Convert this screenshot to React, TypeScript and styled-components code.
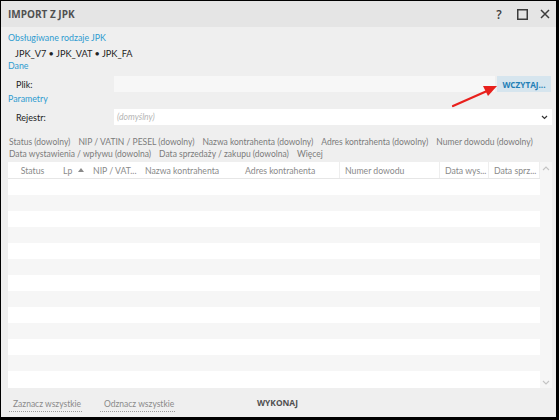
import { createGlobalStyle, styled } from 'styled-components';

const GlobalStyle = createGlobalStyle`
  html, body {
    margin: 0;
    padding: 0;
    background: #ffffff;
  }
  body {
    font-family: Lato, 'Open Sans', sans-serif;
  }
  * {
    box-sizing: border-box;
  }
`;

const Window = styled.div`
  position: relative;
  width: 559px;
  height: 420px;
  display: flex;
  flex-direction: column;
  background: #efefef;
  border-style: solid;
  border-color: #000;
  border-width: 1px 3px 3px 1px;
  overflow: hidden;
`;

const TitleBar = styled.div`
  height: 26px;
  flex: none;
  display: flex;
  align-items: center;
  padding: 0 0 0 7px;
  background: #e5e5e5;
`;

const Title = styled.div`
  flex: 1;
  font-family: 'Open Sans', sans-serif;
  font-size: 10px;
  font-weight: 700;
  color: #505050;
`;

const TitleButtons = styled.div`
  display: flex;
  align-items: center;
  gap: 9px;
  padding-right: 4px;
  color: #3c3c3c;
`;

const TitleButton = styled.div`
  width: 14px;
  height: 14px;
  display: flex;
  align-items: center;
  justify-content: center;
  font-family: 'Open Sans', sans-serif;
  font-size: 12px;
  font-weight: 600;
`;

const Body = styled.div`
  flex: 1;
  display: flex;
  flex-direction: column;
  padding: 0 4px 0 7px;
  min-height: 0;
`;

const SectionTitle = styled.div<{ $top: number }>`
  margin-top: ${(p) => p.$top}px;
  height: 12px;
  line-height: 12px;
  font-size: 8.8px;
  color: #2e9bd0;
`;

const TypesList = styled.div`
  margin-top: 4px;
  padding-left: 7px;
  height: 12px;
  line-height: 12px;
  font-size: 9.2px;
  color: #222;
`;

const FieldRow = styled.div`
  margin-top: 4px;
  height: 16px;
  display: flex;
  align-items: stretch;
`;

const FieldLabel = styled.div`
  width: 106px;
  padding-left: 8px;
  display: flex;
  align-items: center;
  font-size: 9px;
  color: #222;
  flex: none;
`;

const FileInput = styled.div`
  flex: 1;
  background: #f7f7f7;
`;

const LoadButton = styled.div`
  width: 54px;
  margin-left: 2px;
  margin-right: 1px;
  background: #d6e5ee;
  color: #1f7fb6;
  font-family: 'Open Sans', sans-serif;
  font-size: 8.2px;
  font-weight: 700;
  display: flex;
  align-items: center;
  justify-content: center;
`;

const Select = styled.div`
  flex: 1;
  background: #fff;
  display: flex;
  align-items: center;
  justify-content: space-between;
  padding: 0 4px 0 3px;
  font-size: 8.6px;
  font-style: italic;
  color: #b5b5b5;
`;

const Filters = styled.div`
  margin-top: 11px;
  font-size: 8.5px;
  line-height: 12px;
  color: #7b7b7b;
  display: flex;
  flex-wrap: wrap;
  column-gap: 8px;
  padding-left: 1px;
`;

const TableBox = styled.div`
  margin-top: 2px;
  height: 226px;
  background: #fff;
  display: flex;
`;

const Grid = styled.div`
  flex: 1;
  display: flex;
  flex-direction: column;
`;

const HeaderRow = styled.div`
  height: 17px;
  display: flex;
  border-bottom: 1px solid #e6e6e6;
  flex: none;
`;

const HeaderCell = styled.div<{ $w: number; $center?: boolean; $divider?: boolean }>`
  width: ${(p) => p.$w}px;
  flex: none;
  display: flex;
  align-items: center;
  justify-content: ${(p) => (p.$center ? 'center' : 'flex-start')};
  gap: 6px;
  padding-left: ${(p) => (p.$center ? 0 : 5)}px;
  font-size: 8.7px;
  color: #8a8a8a;
  white-space: nowrap;
  overflow: hidden;
  border-right: 1px solid ${(p) => (p.$divider ? '#eeeeee' : 'transparent')};
`;

const Row = styled.div<{ $odd: boolean }>`
  height: 16px;
  flex: none;
  background: ${(p) => (p.$odd ? '#f6f6f6' : '#ffffff')};
`;

const ScrollBar = styled.div`
  width: 12px;
  flex: none;
  background: #f6f6f6;
  display: flex;
  flex-direction: column;
  justify-content: space-between;
  align-items: center;
  padding: 4px 0 3px;
`;

const Footer = styled.div`
  flex: 1;
  display: flex;
  align-items: center;
  padding: 0 0 0 1px;
  font-size: 8.5px;
  white-space: nowrap;
`;

const FooterLink = styled.div<{ $w: number }>`
  width: ${(p) => p.$w}px;
  padding: 1px 4px 2px;
  border-bottom: 1px dotted #9a9a9a;
  color: #8a8a8a;
  margin-right: 18px;
  margin-top: 4px;
`;

const RunButton = styled.div`
  margin-left: 64px;
  font-family: 'Open Sans', sans-serif;
  font-weight: 700;
  color: #505050;
  font-size: 8.4px;
`;

const Arrow = styled.svg`
  position: absolute;
  left: 448px;
  top: 82px;
`;

const columns: { label: string; w: number; center?: boolean; sort?: boolean; divider?: boolean }[] = [
  { label: 'Status', w: 50, center: true },
  { label: 'Lp', w: 30, sort: true },
  { label: 'NIP / VAT...', w: 52 },
  { label: 'Nazwa kontrahenta', w: 100 },
  { label: 'Adres kontrahenta', w: 100, divider: true },
  { label: 'Numer dowodu', w: 100, divider: true },
  { label: 'Data wys...', w: 49, divider: true },
  { label: 'Data sprz...', w: 51, divider: true },
];

const filters = [
  'Status (dowolny)',
  'NIP / VATIN / PESEL (dowolny)',
  'Nazwa kontrahenta (dowolny)',
  'Adres kontrahenta (dowolny)',
  'Numer dowodu (dowolny)',
  'Data wystawienia / wpływu (dowolna)',
  'Data sprzedaży / zakupu (dowolna)',
  'Więcej',
];

function App() {
  const rows = Array.from({ length: 13 }, (_, i) => i);

  return (
    <>
      <GlobalStyle />
      <Window>
        <TitleBar>
          <Title>IMPORT Z JPK</Title>
          <TitleButtons>
            <TitleButton>?</TitleButton>
            <TitleButton>
              <svg width="11" height="11" viewBox="0 0 11 11">
                <rect x="0.75" y="0.75" width="9.5" height="9.5" fill="none" stroke="#3c3c3c" strokeWidth="1.5" />
              </svg>
            </TitleButton>
            <TitleButton>
              <svg width="10" height="10" viewBox="0 0 10 10">
                <path d="M1 1 L9 9 M9 1 L1 9" stroke="#3c3c3c" strokeWidth="1.5" />
              </svg>
            </TitleButton>
          </TitleButtons>
        </TitleBar>

        <Body>
          <SectionTitle $top={5}>Obsługiwane rodzaje JPK</SectionTitle>
          <TypesList>JPK_V7 • JPK_VAT • JPK_FA</TypesList>
          <SectionTitle $top={0}>Dane</SectionTitle>
          <FieldRow>
            <FieldLabel>Plik:</FieldLabel>
            <FileInput />
            <LoadButton>WCZYTAJ...</LoadButton>
          </FieldRow>
          <SectionTitle $top={1}>Parametry</SectionTitle>
          <FieldRow>
            <FieldLabel>Rejestr:</FieldLabel>
            <Select>
              <span>(domyślny)</span>
              <svg width="7" height="5" viewBox="0 0 7 5">
                <path d="M1 1 L3.5 3.5 L6 1" fill="none" stroke="#333" strokeWidth="1.2" />
              </svg>
            </Select>
          </FieldRow>

          <Filters>
            {filters.map((f) => (
              <span key={f}>{f}</span>
            ))}
          </Filters>

          <TableBox>
            <Grid>
              <HeaderRow>
                {columns.map((c) => (
                  <HeaderCell key={c.label} $w={c.w} $center={c.center} $divider={c.divider}>
                    <span>{c.label}</span>
                    {c.sort && (
                      <svg width="6" height="4" viewBox="0 0 6 4">
                        <path d="M0 4 L3 0 L6 4 Z" fill="#8a8a8a" />
                      </svg>
                    )}
                  </HeaderCell>
                ))}
              </HeaderRow>
              {rows.map((i) => (
                <Row key={i} $odd={i % 2 === 1} />
              ))}
            </Grid>
            <ScrollBar>
              <svg width="8" height="5" viewBox="0 0 8 5">
                <path d="M1 4 L4 1 L7 4" fill="none" stroke="#c4c4c4" strokeWidth="1.1" />
              </svg>
              <svg width="8" height="5" viewBox="0 0 8 5">
                <path d="M1 1 L4 4 L7 1" fill="none" stroke="#c4c4c4" strokeWidth="1.1" />
              </svg>
            </ScrollBar>
          </TableBox>

          <Footer>
            <FooterLink $w={73}>Zaznacz wszystkie</FooterLink>
            <FooterLink $w={75}>Odznacz wszystkie</FooterLink>
            <RunButton>WYKONAJ</RunButton>
          </Footer>
        </Body>

        <Arrow width="52" height="26" viewBox="0 0 52 26">
          <path d="M4 23 L38 8" stroke="#e8201c" strokeWidth="2.2" strokeLinecap="round" />
          <path d="M48 3 L34 3 L39 13 Z" fill="#e8201c" />
        </Arrow>
      </Window>
    </>
  );
}

export default App;
